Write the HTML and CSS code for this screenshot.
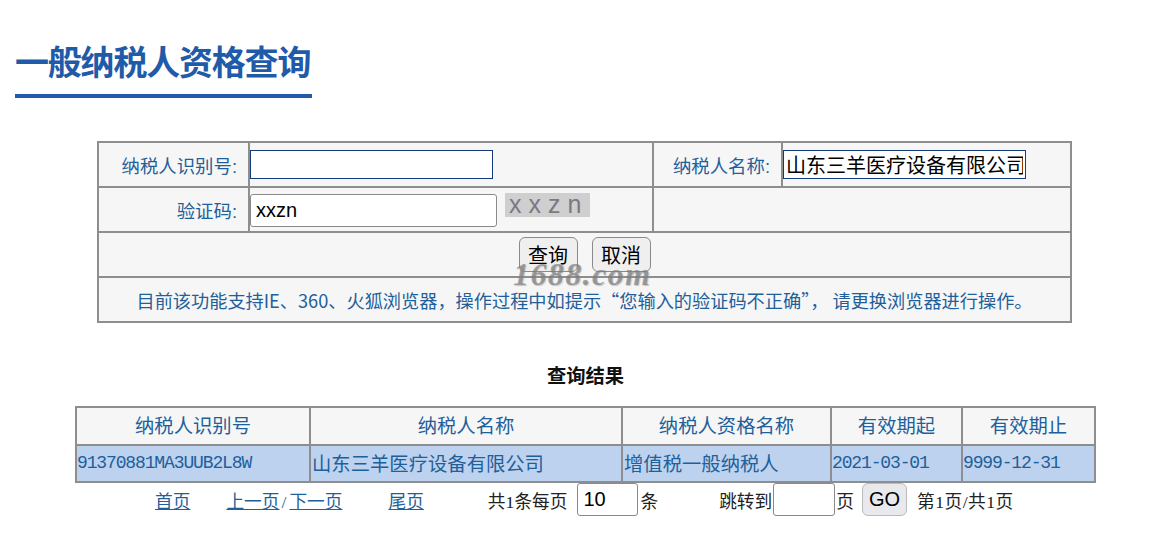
FILE: index.html
```html
<!DOCTYPE html>
<html lang="zh-CN">
<head>
<meta charset="utf-8">
<title>一般纳税人资格查询</title>
<link rel="stylesheet" href="styles.css">
</head>
<body>
<header class="head"><h1 class="title">一般纳税人资格查询</h1></header>
<form class="form-wrap">
  <table class="form-table">
    <colgroup><col class="c1"><col class="c2"><col class="c3"><col class="c4"></colgroup>
    <tr>
      <td class="label">纳税人识别号:</td>
      <td class="field"><input class="input focus" type="text"></td>
      <td class="label">纳税人名称:</td>
      <td class="field"><input class="input focus name" type="text" value="山东三羊医疗设备有限公司"></td>
    </tr>
    <tr>
      <td class="label">验证码:</td>
      <td class="field code-cell"><input class="input code" type="text" value="xxzn"><span class="captcha">xxzn</span></td>
      <td colspan="2"></td>
    </tr>
    <tr>
      <td colspan="4" class="actions"><button type="button" class="btn">查询</button><button type="button" class="btn">取消</button></td>
    </tr>
    <tr>
      <td colspan="4" class="note">目前该功能支持IE、360、火狐浏览器，操作过程中如提示“您输入的验证码不正确”， 请更换浏览器进行操作。</td>
    </tr>
  </table>
  <span class="watermark">1688.com</span>
</form>
<section class="results">
  <h2 class="caption">查询结果</h2>
  <table class="result-table">
    <colgroup><col class="r1"><col class="r2"><col class="r3"><col class="r4"><col class="r5"></colgroup>
    <tr><th>纳税人识别号</th><th>纳税人名称</th><th>纳税人资格名称</th><th>有效期起</th><th>有效期止</th></tr>
    <tr class="row"><td>91370881MA3UUB2L8W</td><td class="pad">山东三羊医疗设备有限公司</td><td class="pad">增值税一般纳税人</td><td>2021-03-01</td><td>9999-12-31</td></tr>
  </table>
  <nav class="pager">
    <a href="#" class="first">首页</a>
    <span class="prevnext"><a href="#">上一页</a><span class="slash">/</span><a href="#">下一页</a></span>
    <a href="#" class="last">尾页</a>
    <span class="count">共1条每页</span>
    <input class="page-input size" type="text" value="10">
    <span class="unit">条</span>
    <span class="jump">跳转到</span>
    <input class="page-input target" type="text">
    <span class="unit">页</span>
    <button type="button" class="go">GO</button>
    <span class="info">第1页/共1页</span>
  </nav>
</section>
</body>
</html>
```
FILE: styles.css
```css
* { box-sizing: border-box; }
html, body { margin: 0; padding: 0; background: #fff; overflow: hidden; }
body { font-family: "Liberation Serif", "Noto Sans CJK SC", serif; height: 544px; }

.head { padding: 38px 0 0 15px; height: 141px; }
.title {
  display: inline-block; margin: 0; width: 297px; height: 60px;
  font: 700 34px/46px "Noto Sans CJK SC", sans-serif; letter-spacing: -1.2px;
  color: #1f5ba8; border-bottom: 4px solid #1f5ba8; white-space: nowrap;
}

.form-wrap { position: relative; margin-left: 97px; width: 973px; }
.form-table {
  width: 973px; height: 182px; table-layout: fixed; border-collapse: collapse;
  background: #f6f6f6; border: 2px solid #8e8e8e;
  font: 18.4px "Liberation Sans", "Noto Sans CJK SC", sans-serif; color: #1f5f9a;
}
.form-table td { border: 2px solid #8e8e8e; padding: 0; height: 45px; }
.c1 { width: 151px; } .c2 { width: 404px; } .c3 { width: 129px; } .c4 { width: 289px; }
.label { text-align: right; padding-right: 11px !important; }
.field { font-size: 0; }
.input { font: 20px "Liberation Sans", "Noto Sans CJK SC", sans-serif; color: #000; margin: 0; }
.focus { width: 243px; height: 29px; border: 1px solid #14397d; border-radius: 0; padding: 1px 2px; background: #fff; outline: none; vertical-align: middle; }
.code { width: 247px; height: 33px; margin-top: 2px; border: 1px solid #8a8a8a; border-radius: 3px; padding: 2px 5px; background: #fff; vertical-align: middle; }
.captcha {
  display: inline-block; width: 85px; height: 24px; margin: 0 0 10px 8px; padding-left: 4px; vertical-align: middle;
  background: #cfcfcf; color: #7a7a82; text-align: left;
  font: 25px/22px "Liberation Sans", sans-serif; letter-spacing: 7px;
}
.actions { text-align: center; font-size: 0; padding-right: 0 !important; }
.btn {
  width: 59px; height: 35px; margin: 0 7px 0; padding: 0; vertical-align: middle;
  font: 20px "Liberation Sans", "Noto Sans CJK SC", sans-serif; color: #000;
  background: #efefef; border: 1px solid #8a8a8a; border-radius: 6px;
}
.note { text-align: center; font: 18.2px "Noto Sans CJK SC", sans-serif; }
.watermark {
  position: absolute; left: 416px; top: 117px;
  font: italic 700 32px/32px "Liberation Serif", serif; letter-spacing: 1.4px;
  color: rgba(120,120,120,.65); text-shadow: 1px 1px 1px rgba(150,150,150,.5); pointer-events: none; white-space: nowrap;
}

.results { margin-left: 75px; width: 1019px; }
.caption { margin: 42px 0 17px; padding-left: 2px; height: 24px; text-align: center; font-weight: 700; font-size: 19.3px; line-height: 24px; color: #111; }
.result-table {
  width: 1019px; height: 76px; table-layout: fixed; border-collapse: collapse;
  border: 2px solid #8e8e8e; font-size: 19.33px; color: #1f5f9a;
}
.result-table th, .result-table td { border: 2px solid #8e8e8e; padding: 0; height: 38px; }
.result-table th { font-weight: 400; text-align: center; background: #f6f6f6; padding-bottom: 3px; }
.result-table .row td { height: 37px; background: #bcd2ef; padding-bottom: 1px; font-family: "Liberation Mono", "Noto Sans CJK SC", monospace; font-size: 18px; letter-spacing: -1.13px; }
.result-table .row td.pad { padding-left: 1px; font-size: 19.33px; letter-spacing: 0; }
.r1 { width: 234px; } .r2 { width: 312px; } .r3 { width: 209px; } .r4 { width: 131px; } .r5 { width: 133px; }

.pager {
  display: flex; align-items: center; height: 33px; margin-left: 80px;
  font-size: 17.7px; color: #222; white-space: nowrap;
}
.pager a { color: #1f5f9a; }
.first { margin-right: 36px; }
.last { margin-left: 46px; margin-right: 64px; }
.slash { color: #1f5f9a; padding: 0 3px 0 2px; }
.page-input { width: 61px; height: 33px; margin: 0; border: 1px solid #8a8a8a; border-radius: 3px; padding: 1px 5px; background: #fff; font: 20px "Liberation Sans", sans-serif; color: #000; }
.size { margin-left: 10px; margin-right: 2px; }
.jump { margin-left: 61px; }
.target { width: 62px; margin-left: 1px; margin-right: 1px; }
.go { width: 45px; height: 33px; margin-left: 8px; margin-right: 10px; padding: 0; font: 20px "Liberation Sans", sans-serif; color: #000; background: #e9e9ed; border: 1px solid #bbb; border-radius: 6px; }
.info { letter-spacing: .5px; }
```
